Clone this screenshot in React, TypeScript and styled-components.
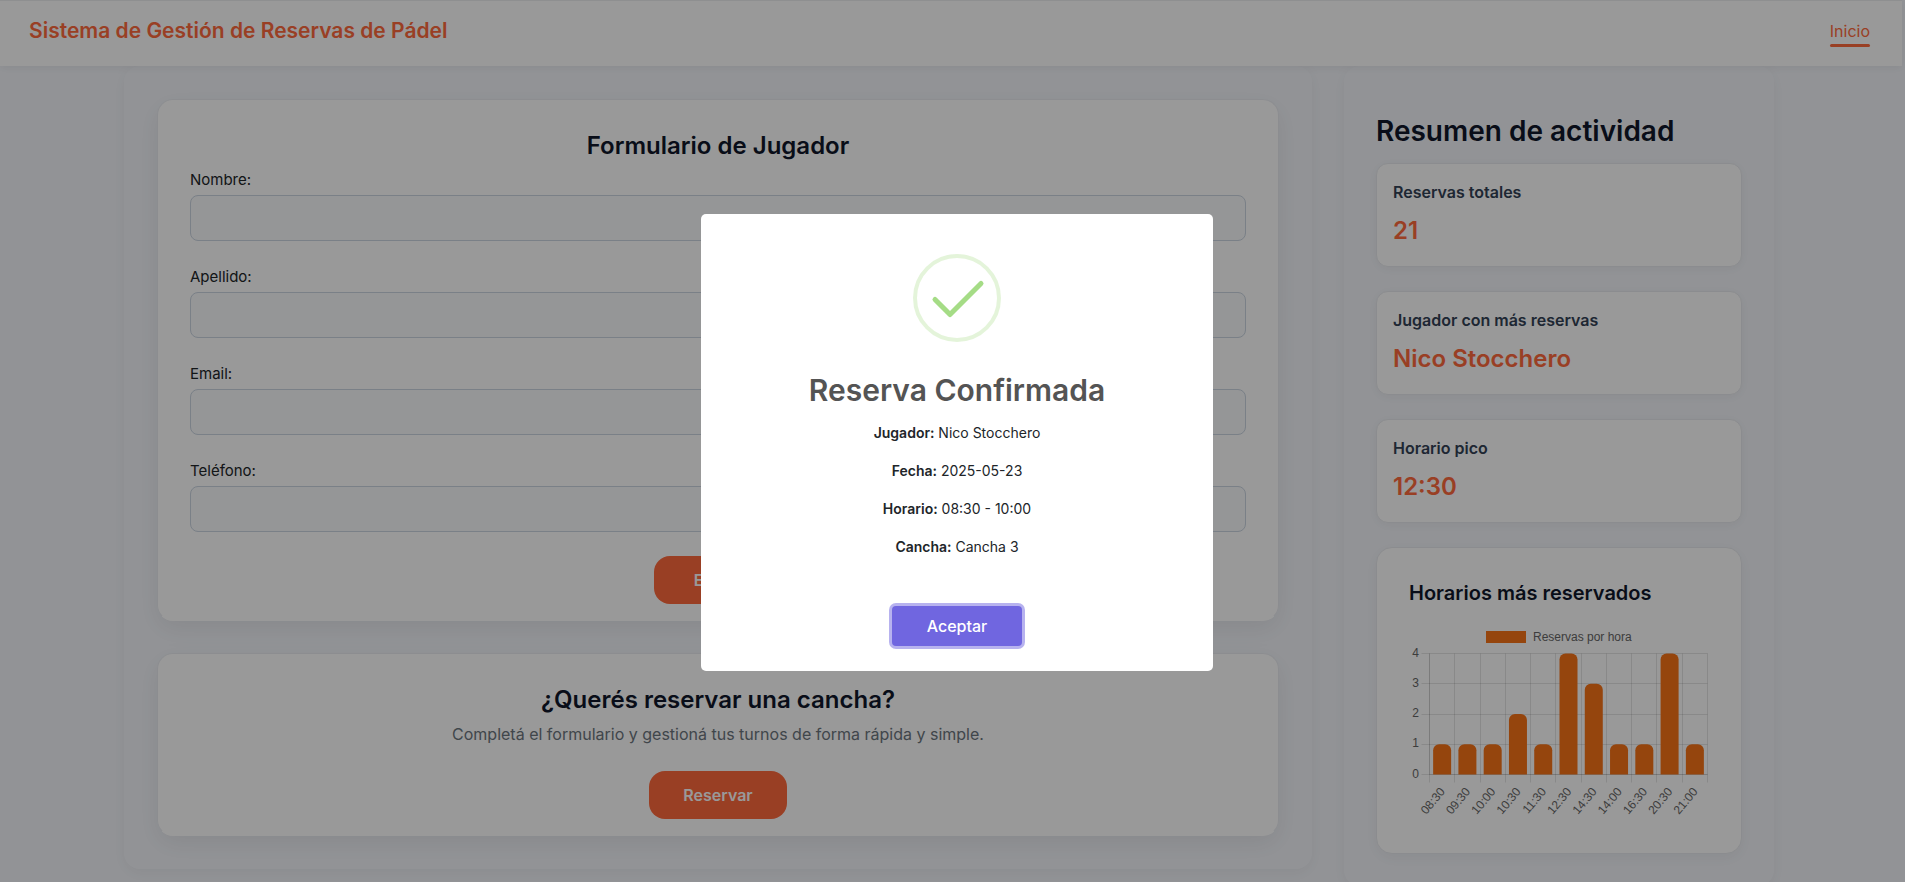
import React from "react";
import styled, { createGlobalStyle } from "styled-components";

const GlobalStyle = createGlobalStyle`
  *, *::before, *::after { box-sizing: border-box; }
  body {
    margin: 0;
    overflow: hidden;
    background: #f4f6fb;
    color: #212529;
    font-family: Inter, "Liberation Sans", sans-serif;
    font-size: 16px;
  }
  h1, h2, h3, p { margin: 0; }
`;

const Page = styled.div`
  height: 100vh;
  overflow: hidden;
`;

const Header = styled.header`
  position: relative;
  z-index: 1;
  display: flex;
  align-items: center;
  justify-content: space-between;
  height: 66px;
  margin-right: 3px;
  padding: 0 32px 0 29px;
  background: #fff;
  border-top: 1px solid #edeef0;
  box-shadow: 0 2px 8px rgba(0, 0, 0, 0.06);
`;

const Brand = styled.h1`
  color: #ff6a3d;
  font-size: 21px;
  font-weight: 600;
  line-height: 26px;
  padding-bottom: 6px;
`;

const NavLink = styled.a`
  display: block;
  padding-bottom: 1px;
  color: #ff6a3d;
  font-size: 16px;
  line-height: 24px;
  text-decoration: none;

  &::after {
    content: "";
    display: block;
    height: 3px;
    margin-top: 1px;
    border-radius: 2px;
    background: #ff6a3d;
  }
`;

const Content = styled.div`
  padding-right: 7px;
`;

const Columns = styled.div`
  display: grid;
  grid-template-columns: minmax(0, 1fr) 430px;
  align-items: start;
  gap: 32px;
  max-width: 1650px;
  margin: 0 auto;
`;

const Panel = styled.main`
  display: flex;
  flex-direction: column;
  gap: 32px;
  padding: 33px;
  border-radius: 16px;
  background: #f4f6fb;
  box-shadow: 0 4px 16px rgba(0, 0, 0, 0.05);
`;

const Sidebar = styled.aside`
  display: flex;
  flex-direction: column;
  gap: 24px;
  padding: 32px;
  border-radius: 16px;
  background: #f4f6fb;
  box-shadow: 0 4px 16px rgba(0, 0, 0, 0.05);
`;

const Card = styled.section`
  display: flex;
  flex-direction: column;
  align-items: center;
  padding: 31px 32px 16px;
  border: 1px solid #eaecf1;
  border-bottom-color: #fff;
  border-radius: 16px;
  background: #fff;
  box-shadow: 0 8px 24px rgba(0, 0, 0, 0.07);
`;

const CardTitle = styled.h2`
  color: #0f172a;
  font-size: 24px;
  font-weight: 600;
  line-height: 29px;
  margin-bottom: 8px;
`;

const Form = styled.form`
  display: flex;
  flex-direction: column;
  align-items: center;
  gap: 24px;
  width: 100%;
`;

const Field = styled.div`
  display: flex;
  flex-direction: column;
  gap: 4px;
  width: 100%;
`;

const Label = styled.label`
  font-size: 15px;
  line-height: 23px;
`;

const Input = styled.input`
  width: 100%;
  height: 46px;
  padding: 0 16px;
  border: 1px solid #cbd5e1;
  border-radius: 8px;
  background: #f8fafc;
  font: inherit;
`;

const Button = styled.button<{ $wide?: boolean }>`
  height: 48px;
  padding: 0 ${(p) => (p.$wide ? 40 : 34)}px;
  border: 0;
  border-radius: 16px;
  background: #ff6a3d;
  color: #fff;
  font-family: inherit;
  font-size: 16px;
  font-weight: 600;
`;

const Lead = styled.p`
  color: #6c757d;
  font-size: 16px;
  line-height: 25px;
  margin-bottom: 24px;
`;

const SidebarTitle = styled.h2`
  color: #0f172a;
  font-size: 28px;
  font-weight: 600;
  line-height: 33px;
  padding-top: 17px;
  margin-bottom: -9px;
`;

const Stat = styled.section`
  padding: 16px 16px 19px;
  border: 1px solid #e8eaee;
  border-radius: 12px;
  background: #fff;
  box-shadow: 0 2px 12px rgba(0, 0, 0, 0.05);
`;

const StatLabel = styled.h3`
  color: #334155;
  font-size: 16px;
  font-weight: 600;
  line-height: 24px;
  margin-bottom: 11px;
`;

const StatValue = styled.p`
  color: #ff6a3d;
  font-size: 24px;
  font-weight: 600;
  line-height: 32px;
`;

const ChartCard = styled.section`
  padding: 33px 32px 32px;
  border: 1px solid #e8eaee;
  border-radius: 16px;
  background: #fff;
  box-shadow: 0 4px 16px rgba(0, 0, 0, 0.05);
`;

const ChartTitle = styled.h3`
  color: #0f172a;
  font-size: 20px;
  font-weight: 600;
  line-height: 25px;
  margin-bottom: 15px;
`;

const ChartSvg = styled.svg`
  display: block;
  width: 100%;
  overflow: visible;
  font-family: "Liberation Sans", Arial, sans-serif;
  font-size: 12px;
  fill: #666;
`;

const Overlay = styled.div`
  position: fixed;
  inset: 0;
  z-index: 10;
  display: flex;
  align-items: center;
  justify-content: center;
  padding: 3px 0 0 9px;
  background: rgba(0, 0, 0, 0.4);
`;

const Dialog = styled.div`
  display: flex;
  flex-direction: column;
  align-items: center;
  width: 512px;
  max-width: 100%;
  padding: 40px 0 25px;
  border-radius: 5px;
  background: #fff;
`;

const DialogTitle = styled.h2`
  color: #545454;
  font-size: 30px;
  font-weight: 600;
  line-height: 38px;
  margin: 29px 0 13px;
`;

const Details = styled.div`
  display: flex;
  flex-direction: column;
  gap: 16px;
  margin-bottom: 48px;
  font-size: 14px;
  line-height: 22px;
  text-align: center;

  strong { font-weight: 600; }
`;

const Confirm = styled.button`
  width: 130px;
  height: 40px;
  border: 0;
  border-radius: 4px;
  background: #7066e0;
  box-shadow: 0 0 0 3px rgba(112, 102, 224, 0.5);
  color: #fff;
  font-family: inherit;
  font-size: 16px;
  font-weight: 500;
`;

const fields = [
  { id: "nombre", label: "Nombre:", type: "text" },
  { id: "apellido", label: "Apellido:", type: "text" },
  { id: "email", label: "Email:", type: "email" },
  { id: "telefono", label: "Teléfono:", type: "tel" },
];

const stats = [
  { label: "Reservas totales", value: "21" },
  { label: "Jugador con más reservas", value: "Nico Stocchero" },
  { label: "Horario pico", value: "12:30" },
];

const hours: [string, number][] = [
  ["08:30", 1], ["09:30", 1], ["10:00", 1], ["10:30", 2], ["11:30", 1], ["12:30", 4],
  ["14:30", 3], ["14:00", 1], ["16:30", 1], ["20:30", 4], ["21:00", 1],
];

const details = [
  ["Jugador:", "Nico Stocchero"],
  ["Fecha:", "2025-05-23"],
  ["Horario:", "08:30 - 10:00"],
  ["Cancha:", "Cancha 3"],
];

// Plot area inside the 300x200 chart.
const plot = { left: 20.5, right: 298.5, top: 32.5, bottom: 153.5 };
const stepX = (plot.right - plot.left) / hours.length;
const stepY = (plot.bottom - plot.top) / 4;

// Centres a one-pixel line on a pixel.
const crisp = (v: number) => Math.floor(v) + 0.5;

function barPath(index: number, value: number) {
  const w = 18;
  const r = 6;
  const x = plot.left + stepX * (index + 0.5) - w / 2;
  const y = plot.bottom - value * stepY;
  return `M${x} ${plot.bottom}V${y + r}a${r} ${r} 0 0 1 ${r} ${-r}h${w - 2 * r}a${r} ${r} 0 0 1 ${r} ${r}V${plot.bottom}z`;
}

function HoursChart() {
  return (
    <ChartSvg viewBox="0 0 300 200" role="img" aria-label="Reservas por hora">
      <rect x={77} y={10} width={40} height={12} fill="#f97316" />
      <text x={124} y={20}>Reservas por hora</text>
      <g stroke="#000" strokeOpacity={0.1}>
        {[0, 1, 2, 3, 4].map((n) => (
          <path key={n} d={`M${plot.left - 8} ${crisp(plot.bottom - n * stepY)}H${plot.right}`} />
        ))}
        {Array.from({ length: hours.length + 1 }, (_, i) => (
          <path key={i} d={`M${crisp(plot.left + i * stepX)} ${plot.top}V${plot.bottom + 8}`} />
        ))}
        <path d={`M${plot.left} ${plot.top}V${plot.bottom}H${plot.right}`} fill="none" />
      </g>
      {hours.map(([hour, value], i) => (
        <path key={hour} d={barPath(i, value)} fill="#f97316" />
      ))}
      {[0, 1, 2, 3, 4].map((n) => (
        <text key={n} x={10} y={plot.bottom - n * stepY + 3} textAnchor="end">{n}</text>
      ))}
      {hours.map(([hour], i) => (
        <text
          key={hour}
          textAnchor="end"
          transform={`translate(${plot.left + stepX * (i + 0.5)} 172) rotate(-50)`}
          x={3}
          y={2}
        >
          {hour}
        </text>
      ))}
    </ChartSvg>
  );
}

export default function App() {
  return (
    <>
      <GlobalStyle />
      <Page>
        <Header>
          <Brand>Sistema de Gestión de Reservas de Pádel</Brand>
          <nav>
            <NavLink href="#inicio">Inicio</NavLink>
          </nav>
        </Header>
        <Content>
          <Columns>
            <Panel>
              <Card>
                <CardTitle>Formulario de Jugador</CardTitle>
                <Form onSubmit={(e) => e.preventDefault()}>
                  {fields.map((f) => (
                    <Field key={f.id}>
                      <Label htmlFor={f.id}>{f.label}</Label>
                      <Input id={f.id} name={f.id} type={f.type} />
                    </Field>
                  ))}
                  <Button type="submit" $wide>Enviar</Button>
                </Form>
              </Card>
              <Card>
                <CardTitle>¿Querés reservar una cancha?</CardTitle>
                <Lead>Completá el formulario y gestioná tus turnos de forma rápida y simple.</Lead>
                <Button type="button">Reservar</Button>
              </Card>
            </Panel>
            <Sidebar>
              <SidebarTitle>Resumen de actividad</SidebarTitle>
              {stats.map((s) => (
                <Stat key={s.label}>
                  <StatLabel>{s.label}</StatLabel>
                  <StatValue>{s.value}</StatValue>
                </Stat>
              ))}
              <ChartCard>
                <ChartTitle>Horarios más reservados</ChartTitle>
                <HoursChart />
              </ChartCard>
            </Sidebar>
          </Columns>
        </Content>
      </Page>
      <Overlay>
        <Dialog role="dialog" aria-modal="true" aria-labelledby="dialog-title">
          <svg width="88" height="88" viewBox="0 0 88 88" fill="none" aria-hidden="true">
            <circle cx="44" cy="44" r="42" stroke="#a5dc86" strokeOpacity="0.3" strokeWidth="4" />
            <path
              d="M22 45.5L37 60.5L68 29.5"
              stroke="#a5dc86"
              strokeWidth="5"
              strokeLinecap="round"
              strokeLinejoin="round"
            />
          </svg>
          <DialogTitle id="dialog-title">Reserva Confirmada</DialogTitle>
          <Details>
            {details.map(([label, value]) => (
              <p key={label}>
                <strong>{label}</strong> {value}
              </p>
            ))}
          </Details>
          <Confirm type="button">Aceptar</Confirm>
        </Dialog>
      </Overlay>
    </>
  );
}
